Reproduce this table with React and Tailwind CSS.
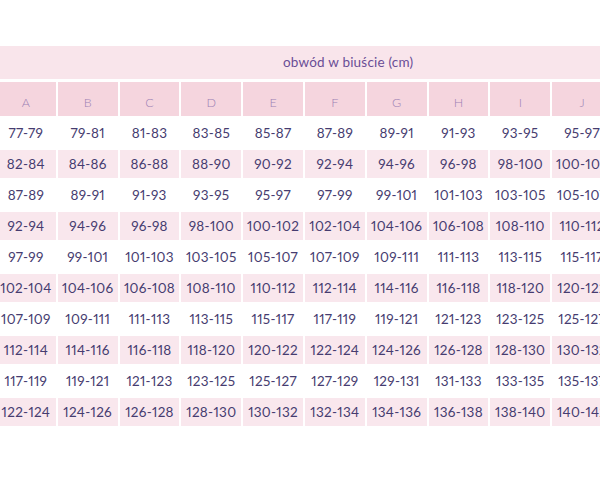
import React from "react";

const cups = ["A", "B", "C", "D", "E", "F", "G", "H", "I", "J"];
const starts = [77, 82, 87, 92, 97, 102, 107, 112, 117, 122];

function range(start, col) {
  const a = start + col * 2;
  return `${a}-${a + 2}`;
}

export default function App() {
  return (
    <div className="h-[480px] w-[600px] overflow-hidden bg-white pt-[46px]" style={{ fontFamily: "Lato, 'Open Sans', sans-serif" }}>
      <div className="flex h-[33px] w-[600px] items-center bg-[#f9e5eb] pl-[283px] text-[13.5px] tracking-[0.2px] text-[#6a4d96]">obwód w biuście (cm)</div>
      <div className="ml-[-4px] mt-[3px] flex w-[620px] flex-col gap-[3px]">
        <div className="flex gap-[2px]">
          {cups.map((cup) => (
            <div key={cup} className="flex h-[34px] w-[59.8px] shrink-0 items-center justify-center bg-[#f5d5de] pt-2 text-[12.5px] font-light text-[#9b80b4]">{cup}</div>
          ))}
        </div>
        {starts.map((start, row) => (
          <div key={start} className="flex gap-[2px]">
            {cups.map((cup, col) => (
              <div key={cup} className={`flex h-[28px] w-[59.8px] shrink-0 items-center justify-center whitespace-nowrap text-[13.5px] tracking-[0.3px] text-[#463c70] proportional-nums ${row % 2 ? "bg-[#f9e7ed]" : "bg-white"}`}>{range(start, col)}</div>
            ))}
          </div>
        ))}
      </div>
    </div>
  );
}
